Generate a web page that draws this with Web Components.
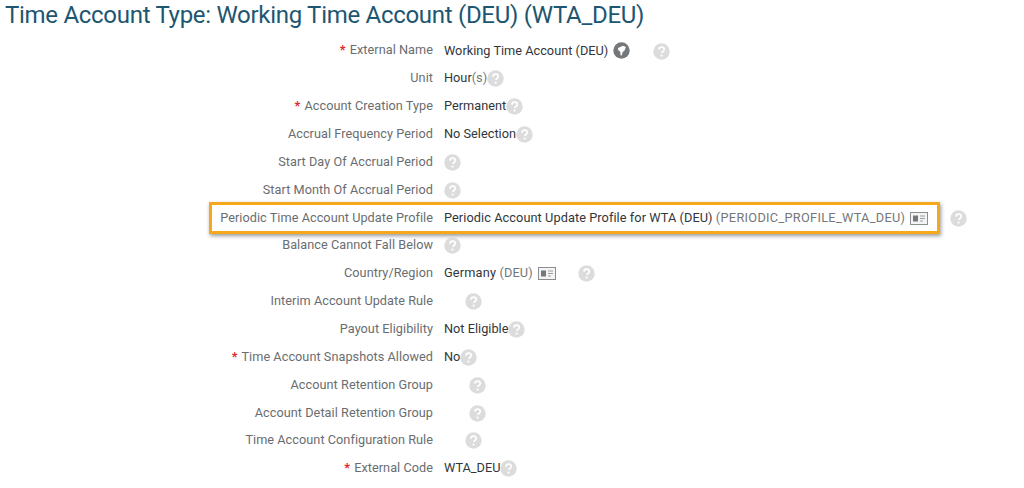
<!DOCTYPE html>
<html>
<head>
<meta charset="utf-8">
<title>Time Account Type</title>
<style>
  html, body { margin: 0; background: #fff; }
  body { width: 1024px; height: 488px; overflow: hidden; font-family: Roboto, "Liberation Sans", sans-serif; }
  ta-row i { font-style: normal; color: #74777a; }
  ta-row i.code { letter-spacing: .3px; }
  ta-row span.wide { letter-spacing: .07px; }
  ta-row span.wider { letter-spacing: .16px; }
</style>
</head>
<body>
<ta-page heading="Time Account Type: Working Time Account (DEU) (WTA_DEU)">
  <ta-row label="External Name" required drop gap="23"><span>Working Time Account (DEU)</span><ta-globe></ta-globe></ta-row>
  <ta-row label="Unit"><span>Hour<i>(s)</i></span></ta-row>
  <ta-row label="Account Creation Type" required><span>Permanent</span></ta-row>
  <ta-row label="Accrual Frequency Period"><span>No Selection</span></ta-row>
  <ta-row label="Start Day Of Accrual Period"></ta-row>
  <ta-row label="Start Month Of Accrual Period"></ta-row>
  <ta-row label="Periodic Time Account Update Profile" highlight gap="22"><span class="wide">Periodic Account Update Profile for WTA (DEU) <i class="code">(PERIODIC_PROFILE_WTA_DEU)</i></span><ta-card></ta-card></ta-row>
  <ta-row label="Balance Cannot Fall Below"></ta-row>
  <ta-row label="Country/Region" gap="22"><span class="wider">Germany <i>(DEU)</i></span><ta-card></ta-card></ta-row>
  <ta-row label="Interim Account Update Rule" gap="21"></ta-row>
  <ta-row label="Payout Eligibility"><span>Not Eligible</span></ta-row>
  <ta-row label="Time Account Snapshots Allowed" required><span>No</span></ta-row>
  <ta-row label="Account Retention Group" gap="25"></ta-row>
  <ta-row label="Account Detail Retention Group" gap="25"></ta-row>
  <ta-row label="Time Account Configuration Rule" gap="21"></ta-row>
  <ta-row label="External Code" required><span>WTA_DEU</span></ta-row>
</ta-page>

<script>
(function() {
  // help bubble, the grey question mark after every value
  class TaHelp extends HTMLElement {
    constructor() {
      super();
      this.attachShadow({mode: "open"}).innerHTML = `
      <style>
        :host { display: inline-block; width: 17px; height: 17px; flex: none; }
        svg { display: block; }
      </style>
      <svg width="17" height="17" viewBox="0 0 17 17">
        <circle cx="8.5" cy="8.5" r="8.2" fill="#dcdcdc"/>
        <path d="M5.900 6.600c.1-1.600 1.200-2.400 2.700-2.400 1.500 0 2.600.9 2.600 2.200 0 1.100-.6 1.600-1.300 2.100-.6.4-.9.8-.9 1.600" fill="none" stroke="#fff" stroke-width="1.700"/>
        <circle cx="8.600" cy="12.600" r="1.100" fill="#fff"/>
      </svg>`;
    }
  }

  // translation globe, darker than the help bubble
  class TaGlobe extends HTMLElement {
    constructor() {
      super();
      this.attachShadow({mode: "open"}).innerHTML = `
      <style>
        :host { display: inline-block; width: 17px; height: 17px; flex: none; margin: 0 0 0 5px; }
        svg { display: block; }
      </style>
      <svg width="17" height="17" viewBox="0 0 17 17">
        <circle cx="8.5" cy="8.5" r="8.2" fill="#75787a"/>
        <path d="M5 6l5-2.200 2.800 1.200-1.200 3.600-2 1.400-.8 3.400-1.200-.2-.4-3.600-2-1.400z" fill="#fff"/>
      </svg>`;
    }
  }

  // quick card icon next to a linked value
  class TaCard extends HTMLElement {
    constructor() {
      super();
      this.attachShadow({mode: "open"}).innerHTML = `
      <style>
        :host { display: inline-block; width: 18px; height: 13px; flex: none; margin: 2px 0 0 5px; }
        svg { display: block; }
      </style>
      <svg width="18" height="13" viewBox="0 0 18 13">
        <rect x=".5" y=".5" width="17" height="12" fill="#f4f4f4" stroke="#8b8d90"/>
        <rect x="3" y="3.500" width="5" height="6" fill="#75787b"/>
        <path d="M10 4h5M10 6.500h5M10 9h3" stroke="#9a9c9f" stroke-width="1.200"/>
      </svg>`;
    }
  }

  let rowTemplate = document.createElement("template");
  rowTemplate.innerHTML = `
  <style>
    :host { display: flex; align-items: center; height: 27.87px; position: relative; font-size: 12.75px; }
    .label { width: 433px; margin-right: 1px; flex: none; text-align: right; color: #6a6d70; white-space: nowrap; font-size: 12.7px; letter-spacing: .05px; }
    .star { color: #e0262b; font-weight: 700; margin-right: 1px; }
    .value { display: flex; align-items: center; margin-left: 10px; color: #32363a; white-space: nowrap; }
    ta-help { margin-top: 2px; }
    :host([drop]) .value { margin-top: 2px; }
    :host([drop]) ta-help { margin-top: 4px; }
    :host([highlight])::before {
      content: ""; position: absolute; left: 209px; top: -1px; width: 725px; height: 26px;
      border: 3px solid #f5a81c; box-shadow: 1px 2px 4px rgba(0,0,0,.4);
    }
    :host([highlight]) .label, :host([highlight]) .value { position: relative; }
  </style>
  <div class="label"><span class="star" hidden>*</span> <span class="text"></span></div>
  <div class="value"><slot></slot></div>
  <ta-help></ta-help>
  `;

  class TaRow extends HTMLElement {
    constructor() {
      super();
      this._shadowRoot = this.attachShadow({mode: "open"});
      this._shadowRoot.appendChild(rowTemplate.content.cloneNode(true));
    }

    connectedCallback() {
      this._shadowRoot.querySelector(".text").textContent = this.getAttribute("label");
      this._shadowRoot.querySelector(".star").hidden = !this.hasAttribute("required");
      // distance from the value to its help bubble differs per row
      this._shadowRoot.querySelector("ta-help").style.marginLeft = Number(this.getAttribute("gap") || 0) + "px";
    }
  }

  class TaPage extends HTMLElement {
    constructor() {
      super();
      this.attachShadow({mode: "open"}).innerHTML = `
      <style>
        :host { display: block; }
        h1 { margin: 0 0 0 5px; height: 36px; font-size: 24px; letter-spacing: -.29px; line-height: 30px; font-weight: 400; color: #1d5671; white-space: nowrap; }
      </style>
      <h1></h1>
      <slot></slot>`;
    }

    connectedCallback() {
      this.shadowRoot.querySelector("h1").textContent = this.getAttribute("heading");
    }
  }

  customElements.define("ta-help", TaHelp);
  customElements.define("ta-globe", TaGlobe);
  customElements.define("ta-card", TaCard);
  customElements.define("ta-row", TaRow);
  customElements.define("ta-page", TaPage);
})();
</script>
</body>
</html>
